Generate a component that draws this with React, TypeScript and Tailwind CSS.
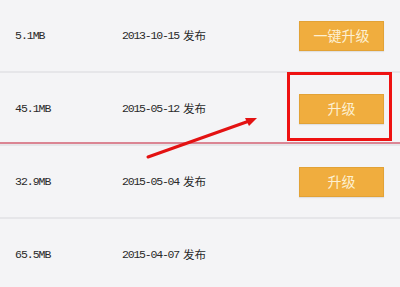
const rows = [
  { size: "5.1MB", date: "2013-10-15", label: "一键升级" },
  { size: "45.1MB", date: "2015-05-12", label: "升级" },
  { size: "32.9MB", date: "2015-05-04", label: "升级" },
  { size: "65.5MB", date: "2015-04-07", label: "" },
];

export default function App() {
  return (
    <div className="relative h-[287px] w-[400px] overflow-hidden bg-[#f4f4f6] font-['Liberation_Mono','Noto_Sans_CJK_SC',monospace] text-[#2a2a2a]">
      {rows.map((r) => (
        <div
          key={r.date}
          className="flex h-[73px] items-center border-b-2 border-[#e6e6e9]"
        >
          <span className="w-[122px] pl-[15px] text-[11.5px] tracking-[-1px]">
            {r.size}
          </span>
          <span className="flex w-[177px] items-center gap-[4px] text-[11.5px]">
            <span className="tracking-[-1.2px]">{r.date}</span>
            <span className="font-['Noto_Sans_CJK_SC',sans-serif] text-[11.5px]">发布</span>
          </span>
          {r.label && (
            <button
              type="button"
              className="flex h-[30px] w-[85px] items-center justify-center border border-[#e2a236] bg-[#f0ad3e] font-['Noto_Sans_CJK_SC',sans-serif] text-[14px] text-[#fdf0d2] shadow-[0_1px_1px_rgba(0,0,0,0.08)]"
            >
              {r.label}
            </button>
          )}
        </div>
      ))}

      {/* annotation overlays */}
      <div className="pointer-events-none absolute left-0 right-0 top-[142px] h-[2px] bg-[#db8593]" />
      <div className="pointer-events-none absolute left-[287px] top-[72px] h-[69px] w-[105px] border-[3px] border-[#ee1111]" />
      <svg
        className="pointer-events-none absolute left-0 top-0"
        width="400"
        height="287"
        viewBox="0 0 400 287"
      >
        <path
          d="M148 157 L252 120"
          stroke="#e31212"
          strokeWidth="3"
          strokeLinecap="round"
          fill="none"
        />
        <path d="M257 118 L245 118 L249 126 Z" fill="#e31212" />
      </svg>
    </div>
  );
}
